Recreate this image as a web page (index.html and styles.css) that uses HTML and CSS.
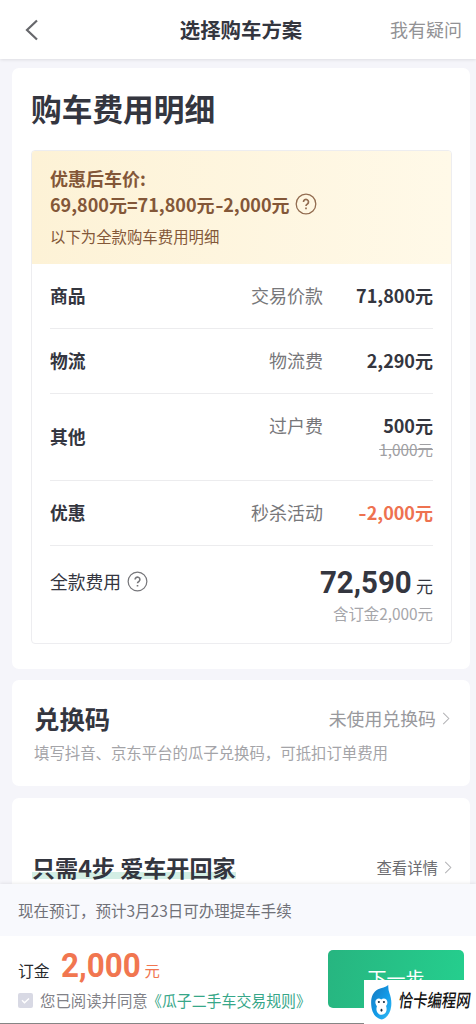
FILE: index.html
```html
<!DOCTYPE html>
<html lang="zh-CN">
<head>
<meta charset="utf-8">
<title>选择购车方案</title>
<link rel="stylesheet" href="styles.css">
</head>
<body>
<div class="page">
  <header class="nav">
    <svg class="back" viewBox="0 0 14 22"><path d="M12 1.5 2 11l10 9.5"/></svg>
    <h1>选择购车方案</h1>
    <span class="nav-help">我有疑问</span>
  </header>
  <main class="content">
    <section class="card cost">
      <h2>购车费用明细</h2>
      <div class="bill">
        <div class="bill-head">
          <div class="bill-title">优惠后车价:</div>
          <div class="formula"><span class="formula-text">69,800元=71,800元<span class="minus">-</span>2,000元</span>
            <svg class="help" viewBox="0 0 22 22"><circle cx="11" cy="11" r="9.8"/><path d="M8.500 9a2.500 2.500 0 1 1 3.900 2c-1 .6-1.400 1-1.400 1.900M11 14.600v1.600"/></svg>
          </div>
          <div class="bill-note">以下为全款购车费用明细</div>
        </div>
        <div class="rows">
          <div class="row"><b>商品</b><span class="item">交易价款</span><b class="amount">71,800元</b></div>
          <div class="row"><b>物流</b><span class="item">物流费</span><b class="amount">2,290元</b></div>
          <div class="row tall"><b>其他</b><span class="item">过户费</span><div class="amount"><b>500元</b><s>1,000元</s></div></div>
          <div class="row"><b>优惠</b><span class="item">秒杀活动</span><b class="amount sale"><span class="minus">-</span>2,000元</b></div>
          <div class="total">
            <div class="total-label">全款费用<svg class="help gray" viewBox="0 0 22 22"><circle cx="11" cy="11" r="9.8"/><path d="M8.500 9a2.500 2.500 0 1 1 3.900 2c-1 .6-1.400 1-1.400 1.900M11 14.600v1.600"/></svg></div>
            <div class="total-value">
              <div class="sum"><span class="num">72,590</span><span class="unit">元</span></div>
              <div class="included">含订金2,000元</div>
            </div>
          </div>
        </div>
      </div>
    </section>
    <section class="card coupon">
      <div class="coupon-top">
        <h3>兑换码</h3>
        <span class="coupon-state">未使用兑换码<svg class="chevron" viewBox="0 0 8 14"><path d="m1 1 6 6-6 6"/></svg></span>
      </div>
      <p>填写抖音、京东平台的瓜子兑换码，可抵扣订单费用</p>
    </section>
    <section class="card steps">
      <h4>只需4步 爱车开回家</h4>
      <span class="detail">查看详情<svg class="chevron" viewBox="0 0 8 14"><path d="m1 1 6 6-6 6"/></svg></span>
    </section>
  </main>
  <footer class="bar">
    <div class="notice">现在预订，预计3月23日可办理提车手续</div>
    <div class="action">
      <div class="pay">
        <div class="deposit"><span class="deposit-label">订金</span><span class="num">2,000</span><span class="deposit-unit">元</span></div>
        <div class="agree"><svg class="check" viewBox="0 0 15 15"><rect width="15" height="15" rx="2"/><path d="m4 7.3 2.500 2.500L11 5.400"/></svg><span>您已阅读并同意</span><span class="rules">《瓜子二手车交易规则》</span></div>
      </div>
      <div class="next">下一步</div>
    </div>
  </footer>
  <div class="watermark">
    <svg class="mascot" viewBox="0 0 22 38">
      <defs><linearGradient id="flame" x1="0" y1="0" x2="1" y2="1"><stop offset="0" stop-color="#1677bd"/><stop offset=".55" stop-color="#139be8"/><stop offset="1" stop-color="#35bdf5"/></linearGradient></defs>
      <path fill="url(#flame)" d="M18.500 1c-.2 3 .2 5.700 1.200 8.500 1.400 4 2.300 8 1.800 13C20.700 30 17 35 11.800 36.500 6 35.500 1.600 30 1 22 .3 14 2.500 8.500 8 5.500 12 3.700 15.500 3.500 18.500 1z"/>
      <path fill="#fff" d="M5.200 18.500c0-3.500 4-4.700 6-2.500 2.300-2.300 6.400-.8 6.400 2.700 0 1.800-.7 2.800-1.400 4 1.700 5-.6 9-4.500 9s-6.600-4-4.900-8.800c-.9-1.300-1.600-2.600-1.600-4.400z"/>
      <circle cx="8.800" cy="18.500" r="1.100"/><circle cx="14" cy="18.500" r="1.100"/><ellipse cx="11.500" cy="27" rx="1" ry="1.500"/>
    </svg>
    <span class="brand">恰卡编程网</span>
  </div>
</div>
</body>
</html>
```
FILE: styles.css
```css
* { box-sizing: border-box; margin: 0; padding: 0; }
body { font-family: "Noto Sans CJK SC", sans-serif; color: #34363f; background: #f5f5fa; }
svg { display: block; fill: none; flex: none; }
.page { position: relative; width: 476px; height: 1024px; overflow: hidden; display: flex; flex-direction: column; }
.nav { height: 59px; flex: none; background: #fff; box-shadow: 0 1px 3px #00000018; display: grid; grid-template-columns: 1fr auto 1fr; align-items: center; padding: 0 14px 0 25px; }
.back { width: 14px; height: 22px; stroke: #66676b; stroke-width: 2.2; }
.nav h1 { font-size: 20.4px; line-height: 30px; font-weight: 700; margin: 0 0 1px -5px; }
.nav-help { font-size: 18px; line-height: 28px; color: #929295; justify-self: end; margin-bottom: 1px; }
.content { flex: 1; min-height: 0; overflow: hidden; padding: 9px 6px 0 12px; display: flex; flex-direction: column; }
.card { background: #fff; border-radius: 7px; flex: none; }
.cost { height: 601px; padding: 20px 18px 0 19px; margin-bottom: 11px; }
.cost h2 { font-size: 30.7px; line-height: 40px; font-weight: 700; margin-bottom: 22px; }
.bill { height: 494px; border: 1px solid #ededf0; border-radius: 4px; overflow: hidden; }
.bill-head { height: 114px; margin: -1px -1px 0; padding: 14px 19px 0; background: linear-gradient(90deg, #fdf2d6, #fff9e8); border: 1px solid #f8edcb; border-bottom: 0; color: #835738; }
.bill-title { font-size: 18px; line-height: 26px; font-weight: 700; margin-left: -1px; }
.formula { display: flex; align-items: center; gap: 5px; height: 26px; font-size: 18px; line-height: 26px; font-weight: 700; margin-left: -1px; white-space: nowrap; }
.minus { display: inline-block; transform: scaleX(1.25); margin: 0 1px; }
.help { width: 22px; height: 22px; stroke: #936d51; stroke-width: 1.3; }
.help path { stroke-width: 1.7; }
.help.gray { stroke: #77777b; }
.bill-note { font-size: 15.4px; line-height: 24px; margin-top: 7px; margin-left: -1px; }
.rows { padding: 0 18px; }
.row { height: 65px; display: grid; grid-template-columns: 1fr auto 110px; align-items: center; font-size: 18px; line-height: 26px; border-bottom: 1px solid #ececee; padding-bottom: 2px; }
.row > b:first-child { font-size: 17.8px; }
.item { color: #77777a; }
.amount { text-align: right; white-space: nowrap; }
.tall { height: 87px; }
.tall .item { align-self: start; margin-top: 18px; }
.tall .amount { align-self: start; margin-top: 18px; display: flex; flex-direction: column; align-items: flex-end; }
.tall s { font-size: 15.4px; line-height: 22px; color: #a0a0a3; }
.sale { color: #ee7250; }
.total { display: flex; justify-content: space-between; padding-top: 15px; }
.total-label { display: flex; align-items: center; height: 42px; gap: 6px; font-size: 17.8px; line-height: 28px; margin-top: -1px; }
.total-label .help { width: 21px; height: 21px; }
.sum { height: 41px; display: flex; justify-content: flex-end; align-items: baseline; }
.num { display: inline-block; font-family: Roboto, sans-serif; font-weight: 700; }
.sum .num { font-size: 32px; line-height: 42px; transform: scaleX(.92); transform-origin: 100% 50%; }
.unit { font-size: 17px; line-height: 30px; margin-left: 4px; }
.included { font-size: 15.4px; line-height: 22px; color: #a6a6aa; text-align: right; }
.coupon { height: 106px; padding: 19px 20px 0 22px; margin-bottom: 12px; }
.coupon-top { display: flex; justify-content: space-between; align-items: center; height: 38px; }
.coupon h3 { font-size: 25.4px; line-height: 38px; font-weight: 700; }
.coupon-state { display: flex; align-items: center; gap: 6px; font-size: 17.9px; line-height: 26px; color: #99999d; }
.chevron { width: 8px; height: 13px; stroke: #b3b3b6; stroke-width: 1.1; }
.coupon p { font-size: 15.4px; line-height: 24px; color: #a4a4a8; margin-top: 3px; }
.steps { height: 106px; padding: 53px 18px 0 20px; display: flex; justify-content: space-between; align-items: flex-start; }
.steps h4 { font-size: 23.1px; line-height: 32px; font-weight: 700; background: linear-gradient(#d3eee5, #d3eee5) 0 21px / 100% 7px no-repeat; }
.detail { display: flex; align-items: center; gap: 6px; font-size: 15.4px; line-height: 32px; color: #6c6c70; }
.bar { height: 140px; flex: none; background: #fff; box-shadow: 0 -1px 3px #00000014; position: relative; }
.notice { height: 52px; background: #f8f9fd; padding: 13px 18px; font-size: 15.5px; line-height: 26px; color: #707178; }
.action { height: 88px; border-bottom: 1px solid #858585; padding: 15px 12px 0 18px; display: flex; justify-content: space-between; }
.pay { white-space: nowrap; }
.deposit { display: flex; align-items: baseline; height: 37px; }
.deposit-label { font-size: 15.8px; line-height: 26px; color: #29292d; margin-right: 11px; }
.deposit .num { color: #f17650; font-size: 33px; line-height: 30px; transform: scaleX(.95); transform-origin: 0 50%; margin-right: -4px; }
.deposit-unit { color: #f17650; font-size: 15.4px; line-height: 26px; margin-left: 4px; }
.agree { display: flex; align-items: center; height: 24px; font-size: 15.4px; line-height: 24px; color: #818187; }
.check { width: 15px; height: 15px; margin-right: 7px; }
.check rect { fill: #d8d9e4; }
.check path { stroke: #fff; stroke-width: 1.4; }
.rules { color: #37a789; display: inline-block; margin-left: -1px; transform: scaleX(.968); transform-origin: 0 50%; }
.next { width: 136px; height: 58px; margin-top: -1px; border-radius: 5px; background: linear-gradient(100deg, #27b580, #25cf8e); color: #fff; font-size: 19px; line-height: 56px; text-align: center; }
.watermark { position: absolute; right: 0; bottom: 0; width: 112px; height: 44px; background: #fff; display: flex; align-items: flex-start; padding: 4px 0 0 6px; }
.mascot { width: 22px; height: 37px; }
.mascot circle, .mascot ellipse { fill: #152e43; }
.brand { font-family: "Noto Sans CJK SC", sans-serif; font-size: 18px; line-height: 28px; font-weight: 500; color: #141414; margin: 1px 0 0 7px; transform: skewX(-8deg) scaleX(.8); transform-origin: 0 50%; white-space: nowrap; }
```
